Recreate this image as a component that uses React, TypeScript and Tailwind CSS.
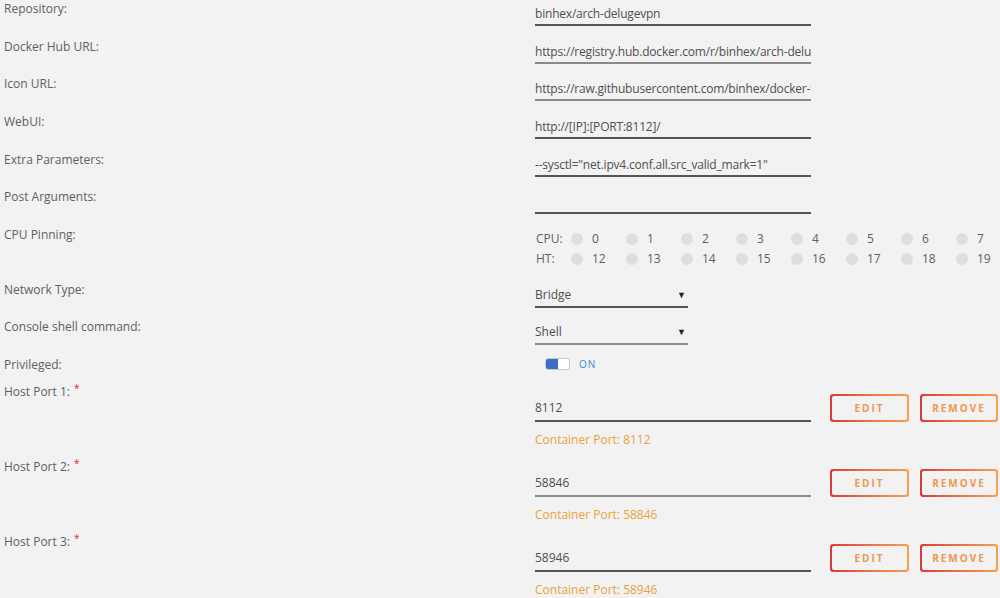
import type { ReactNode } from 'react';

const font = { fontFamily: '"Open Sans", "Liberation Sans", sans-serif' };

function Label({ children, req }: { children: ReactNode; req?: boolean }) {
  return (
    <div className="w-[535px] shrink-0 pl-[4px] text-[12px] leading-[18px] text-[#5f5f5f]">
      {children}
      {req && <span className="relative -top-[4px] ml-[4px] text-[10px] text-[#e22828]">*</span>}
    </div>
  );
}

function TextRow({ label, value, dark = true }: { label: string; value: string; dark?: boolean }) {
  return (
    <div className="flex h-[37.7px]">
      <Label>{label}</Label>
      <div
        className={`mt-[5px] h-[21px] w-[276px] overflow-hidden whitespace-nowrap border-b-2 text-[12px] leading-[18px] tracking-[-0.2px] text-[#4f4f4f] ${
          dark ? 'border-[#555555]' : 'border-[#8a8a8a]'
        }`}
      >
        {value}
      </div>
    </div>
  );
}

function SelectRow({ label, value, h, dark = true }: { label: string; value: string; h: string; dark?: boolean }) {
  return (
    <div className={`flex ${h}`}>
      <Label>{label}</Label>
      <div
        className={`mt-[5px] flex h-[22px] w-[153px] justify-between border-b-2 text-[12px] leading-[18px] text-[#4f4f4f] ${
          dark ? 'border-[#555555]' : 'border-[#8a8a8a]'
        }`}
      >
        <span>{value}</span>
        <span className="pr-[2px] text-[9px] text-[#222]">▼</span>
      </div>
    </div>
  );
}

function GradButton({ text }: { text: string }) {
  return (
    <div className="h-[28px] rounded-[3px] bg-gradient-to-r from-[#d83a3a] to-[#f5a050] p-[2px]">
      <div className="flex h-full w-full items-center justify-center rounded-[2px] bg-[#f2f2f2] text-[10px] font-bold tracking-[2px] text-[#ef9650]">
        {text}
      </div>
    </div>
  );
}

function PortRow({ n, port, dark = true }: { n: number; port: string; dark?: boolean }) {
  return (
    <div className="flex h-[75px]">
      <Label req>Host Port {n}:</Label>
      <div>
        <div className="mt-[11px] flex items-end">
          <div
            className={`h-[23px] w-[276px] border-b-2 text-[12px] leading-[18px] text-[#4f4f4f] ${
              dark ? 'border-[#555555]' : 'border-[#8a8a8a]'
            }`}
          >
            {port}
          </div>
          <div className="ml-[19px] flex gap-[11px]">
            <div className="w-[79px]">
              <GradButton text="EDIT" />
            </div>
            <div className="w-[78px]">
              <GradButton text="REMOVE" />
            </div>
          </div>
        </div>
        <div className="mt-[9px] text-[12px] leading-[18px] text-[#e8a23c]">Container Port: {port}</div>
      </div>
    </div>
  );
}

function CpuLine({ label, nums }: { label: string; nums: number[] }) {
  return (
    <div className="flex h-[20px] items-center text-[12px] text-[#5f5f5f]">
      <div className="w-[36px] shrink-0 pl-[1px]">{label}</div>
      {nums.map((n) => (
        <div key={n} className="flex w-[55px] shrink-0 items-center">
          <span className="h-[12px] w-[12px] rounded-full bg-[#dedede]" />
          <span className="ml-[9px]">{n}</span>
        </div>
      ))}
    </div>
  );
}

export default function App() {
  return (
    <div className="h-[598px] w-[1000px] overflow-hidden bg-[#f2f2f2]" style={font}>
      <TextRow label="Repository:" value="binhex/arch-delugevpn" />
      <TextRow label="Docker Hub URL:" value="https://registry.hub.docker.com/r/binhex/arch-delugevpn/" dark={false} />
      <TextRow label="Icon URL:" value="https://raw.githubusercontent.com/binhex/docker-templates/master/binhex/images/deluge-icon.png" dark={false} />
      <TextRow label="WebUI:" value="http://[IP]:[PORT:8112]/" />
      <TextRow label="Extra Parameters:" value={'--sysctl="net.ipv4.conf.all.src_valid_mark=1"'} />
      <TextRow label="Post Arguments:" value="" />

      <div className="flex h-[55px]">
        <Label>CPU Pinning:</Label>
        <div className="mt-[3px] w-[465px] overflow-hidden">
          <CpuLine label="CPU:" nums={[0, 1, 2, 3, 4, 5, 6, 7]} />
          <CpuLine label="HT:" nums={[12, 13, 14, 15, 16, 17, 18, 19]} />
        </div>
      </div>

      <SelectRow label="Network Type:" value="Bridge" h="h-[37px]" />
      <SelectRow label="Console shell command:" value="Shell" h="h-[38px]" dark={false} />

      <div className="flex h-[27px]">
        <Label>Privileged:</Label>
        <div className="ml-[10px] mt-[2px] flex h-[12px] items-center self-start">
          <div className="flex h-[12px] w-[25px] overflow-hidden rounded-[3px] border border-[#c9c9c9]">
            <div className="w-[12px] bg-[#3f6cc4]" />
            <div className="flex-1 rounded-[3px] bg-white" />
          </div>
          <span className="ml-[9px] text-[10px] leading-[12px] tracking-[1px] text-[#3d8fd1]">ON</span>
        </div>
      </div>

      <PortRow n={1} port="8112" />
      <PortRow n={2} port="58846" dark={false} />
      <PortRow n={3} port="58946" />
    </div>
  );
}
